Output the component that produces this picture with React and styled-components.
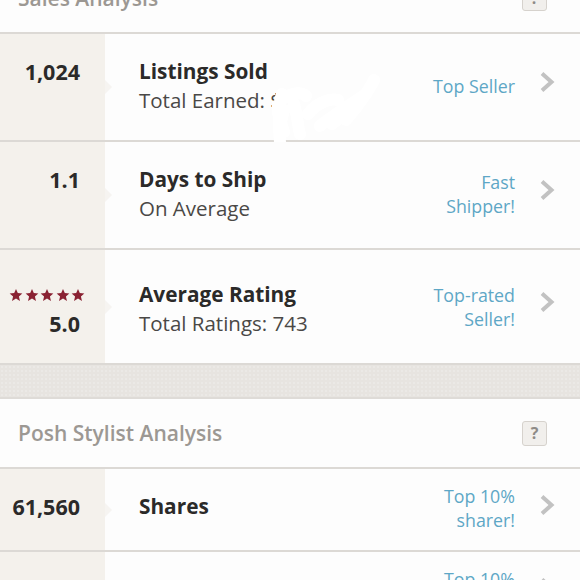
import React from 'react'
import styled, { createGlobalStyle } from 'styled-components'

const GlobalStyle = createGlobalStyle`
  body {
    margin: 0;
    background: #fdfdfd;
    font-family: 'Open Sans', Lato, sans-serif;
    overflow: hidden;
  }
`

const Page = styled.div`
  margin-top: -36px;
  background: #fdfdfd;
`

const SectionHeader = styled.div`
  height: 68px;
  display: flex;
  align-items: center;
  justify-content: space-between;
  padding: 0 33px 0 18px;
  border-bottom: 2px solid #dcd9d5;
  background: #fdfdfd;
`

const SectionTitle = styled.h2`
  margin: 0;
  font-size: 21px;
  font-weight: 600;
  color: #9c9893;
`

const HelpBox = styled.div`
  width: 23px;
  height: 23px;
  border: 1px solid #d6d2cd;
  border-radius: 3px;
  background: #f1efec;
  color: #8e8b87;
  font-size: 16px;
  font-weight: 700;
  display: flex;
  align-items: center;
  justify-content: center;
`

const Row = styled.div`
  position: relative;
  display: flex;
  height: ${(p) => p.$h}px;
  box-sizing: border-box;
  border-bottom: 2px solid #dcd9d5;
  background: #fdfdfd;
`

const NumberCell = styled.div`
  position: relative;
  width: 105px;
  flex-shrink: 0;
  background: #f4f1ec;
  display: flex;
  flex-direction: column;
  justify-content: center;
  align-items: flex-end;
  padding-right: 25px;
  padding-top: ${(p) => p.$pt || 0}px;
  padding-bottom: ${(p) => p.$pb || 0}px;
  box-sizing: border-box;

  &::after {
    content: '';
    position: absolute;
    right: -7px;
    top: 50%;
    margin-top: -7px;
    border-left: 7px solid #f6f4f1;
    border-top: 7px solid transparent;
    border-bottom: 7px solid transparent;
  }
`

const Line = styled.div`
  height: 29px;
  line-height: 29px;
  font-size: 21.5px;
  font-weight: 700;
  color: #2b2a29;
`

const Stars = styled.div`
  display: flex;
  gap: 1.5px;
  margin-right: -5px;
  height: 29px;
  align-items: center;
`

const Content = styled.div`
  flex: 1;
  display: flex;
  flex-direction: column;
  justify-content: center;
  padding-left: 34px;
  padding-top: ${(p) => p.$pt || 0}px;
  padding-bottom: ${(p) => p.$pb || 0}px;
`

const Title = styled.div`
  height: 29px;
  line-height: 29px;
  font-size: 20.8px;
  font-weight: 700;
  color: #2b2a29;
`

const Subtitle = styled.div`
  height: 29px;
  line-height: 29px;
  font-size: 20.5px;
  color: #4a4846;
`

const Badge = styled.div`
  display: flex;
  align-items: center;
  text-align: right;
  font-size: 17.8px;
  line-height: 24px;
  color: #5ea7c6;
  padding-right: 24px;
  padding-bottom: ${(p) => (p.$pb ? 3 : 0)}px;
`

const ChevronWrap = styled.div`
  display: flex;
  align-items: center;
  padding-right: 25px;
  margin-bottom: 10px;
`

const Band = styled.div`
  height: 32px;
  border-bottom: 2px solid #dedbd7;
  background-color: #e7e4e0;
  background-image: radial-gradient(rgba(255, 255, 255, 0.18) 1px, transparent 1px);
  background-size: 4px 4px;
`

const Scribble = styled.svg`
  position: absolute;
  left: 272px;
  top: 36px;
`

const Star = () => (
  <svg width="14" height="14" viewBox="0 0 24 24">
    <path
      d="M12 1.5l3.1 7.2 7.8.7-5.9 5.1 1.8 7.6L12 18.1l-6.8 4 1.8-7.6-5.9-5.1 7.8-.7z"
      fill="#8a2233"
    />
  </svg>
)

const Chevron = () => (
  <svg width="16" height="22" viewBox="0 0 16 22">
    <polyline
      points="3,2.5 12.5,11 3,19.5"
      fill="none"
      stroke="#c2c2c2"
      strokeWidth="4"
    />
  </svg>
)

const rows = [
  {
    num: '1,024',
    title: 'Listings Sold',
    sub: 'Total Earned: $',
    badge: ['Top Seller'],
    h: 108,
    pb: 3,
  },
  {
    num: '1.1',
    title: 'Days to Ship',
    sub: 'On Average',
    badge: ['Fast', 'Shipper!'],
    h: 108,
    pb: 3,
  },
  {
    num: '5.0',
    stars: true,
    title: 'Average Rating',
    sub: 'Total Ratings: 743',
    badge: ['Top-rated', 'Seller!'],
    h: 115,
    pt: 5,
  },
]

const stylistRows = [
  { num: '61,560', title: 'Shares', badge: ['Top 10%', 'sharer!'], h: 83, pb: 7 },
  { num: '2,310', title: 'Parties Attended', badge: ['Top 10%', 'party goer!'], h: 83, pb: 7 },
]

const StatRow = ({ row, children }) => (
  <Row $h={row.h}>
    <NumberCell $pt={row.pt} $pb={row.pb}>
      {row.stars ? (
        <Stars>
          {[0, 1, 2, 3, 4].map((i) => (
            <Star key={i} />
          ))}
        </Stars>
      ) : (
        <Line>{row.num}</Line>
      )}
      {row.stars && <Line>{row.num}</Line>}
      {!row.stars && row.sub && <Line />}
    </NumberCell>
    <Content $pt={row.pt} $pb={row.pb}>
      <Title>{row.title}</Title>
      {row.sub && <Subtitle>{row.sub}</Subtitle>}
    </Content>
    <Badge $pb={row.pb}>
      <div>
        {row.badge.map((b) => (
          <div key={b}>{b}</div>
        ))}
      </div>
    </Badge>
    <ChevronWrap>
      <Chevron />
    </ChevronWrap>
    {children}
  </Row>
)

const App = () => (
  <Page>
    <GlobalStyle />
    <SectionHeader>
      <SectionTitle>Sales Analysis</SectionTitle>
      <HelpBox>?</HelpBox>
    </SectionHeader>
    {rows.map((r, i) => (
      <StatRow key={r.title} row={r}>
        {i === 0 && (
          <Scribble width="115" height="80" viewBox="0 0 115 80">
            <path
              d="M8 72 C6 50 6 34 10 24 M8 56 L12 40 M12 28 C22 22 30 22 34 26 M22 34 C26 48 26 58 28 64 M36 44 C44 34 56 28 66 30 M48 56 C60 46 80 34 94 24 M74 50 C84 38 96 22 102 10 M60 54 C70 46 78 40 84 38 M4 36 L12 62"
              fill="none"
              stroke="#ffffff"
              strokeWidth="12"
              strokeLinecap="round"
            />
          </Scribble>
        )}
      </StatRow>
    ))}
    <Band />
    <SectionHeader>
      <SectionTitle>Posh Stylist Analysis</SectionTitle>
      <HelpBox>?</HelpBox>
    </SectionHeader>
    {stylistRows.map((r) => (
      <StatRow key={r.title} row={r} />
    ))}
  </Page>
)

export default App
